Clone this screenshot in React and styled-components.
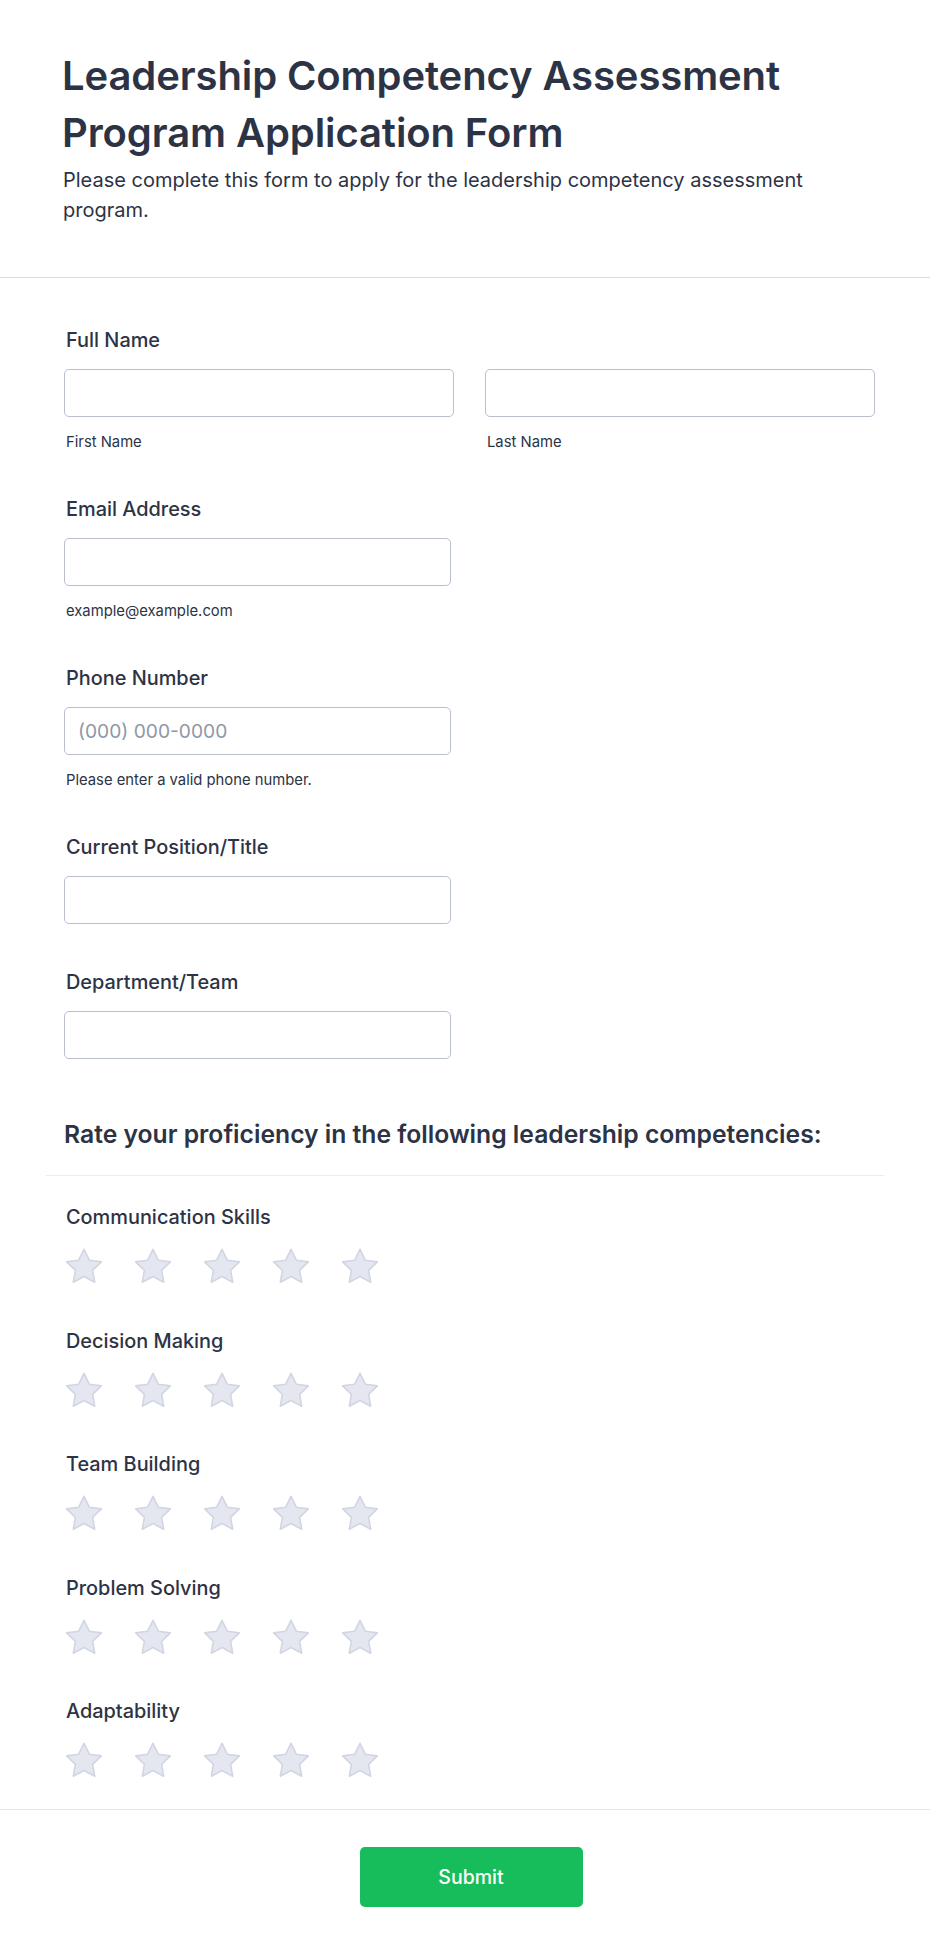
import React from "react";
import styled, { createGlobalStyle } from "styled-components";

const GlobalStyle = createGlobalStyle`
  html, body {
    margin: 0;
    padding: 0;
    background: #ffffff;
  }
  body {
    font-family: Inter, "Noto Sans", "Liberation Sans", sans-serif;
    color: #2c3345;
  }
  * {
    box-sizing: border-box;
  }
`;

const ratings = [
  "Communication Skills",
  "Decision Making",
  "Team Building",
  "Problem Solving",
  "Adaptability",
];

function Star() {
  return (
    <StarSvg viewBox="0 0 40 40" aria-hidden="true">
      <polygon
        points="20,2.3 25.3,13.2 37.3,14.9 28.6,23.3 30.7,35.2 20,29.5 9.3,35.2 11.4,23.3 2.7,14.9 14.7,13.2"
        fill="#e4e7f0"
        stroke="#d2d6e3"
        strokeWidth="1.6"
        strokeLinejoin="round"
      />
    </StarSvg>
  );
}

function App() {
  return (
    <Page>
      <GlobalStyle />

      <Header>
        <Title>Leadership Competency Assessment Program Application Form</Title>
        <Subtitle>
          Please complete this form to apply for the leadership competency assessment program.
        </Subtitle>
      </Header>

      <FormBody>
        <Field>
          <Label>Full Name</Label>
          <NameRow>
            <Column>
              <Input type="text" />
              <Sub>First Name</Sub>
            </Column>
            <Column>
              <Input type="text" />
              <Sub>Last Name</Sub>
            </Column>
          </NameRow>
        </Field>

        <Field>
          <Label>Email Address</Label>
          <Input type="email" $width="387px" />
          <Sub>example@example.com</Sub>
        </Field>

        <Field>
          <Label>Phone Number</Label>
          <Input type="tel" $width="387px" placeholder="(000) 000-0000" />
          <Sub>Please enter a valid phone number.</Sub>
        </Field>

        <Field>
          <Label>Current Position/Title</Label>
          <Input type="text" $width="387px" />
        </Field>

        <Field>
          <Label>Department/Team</Label>
          <Input type="text" $width="387px" />
        </Field>

        <RatingHeading>Rate your proficiency in the following leadership competencies:</RatingHeading>
        <Divider />

        <RatingList>
          {ratings.map((name) => (
            <RatingItem key={name}>
              <Label>{name}</Label>
              <Stars>
                {[1, 2, 3, 4, 5].map((n) => (
                  <Star key={n} />
                ))}
              </Stars>
            </RatingItem>
          ))}
        </RatingList>
      </FormBody>

      <Footer>
        <SubmitButton type="button">Submit</SubmitButton>
      </Footer>
    </Page>
  );
}

const Page = styled.div`
  width: 930px;
  min-height: 1956px;
  background: #ffffff;
  display: flex;
  flex-direction: column;
`;

const Header = styled.header`
  padding: 47px 60px 52px 62px;
  border-bottom: 1px solid #d8dae8;
`;

const Title = styled.h1`
  margin: 0;
  font-size: 40px;
  line-height: 57px;
  font-weight: 600;
  color: #2c3345;
  letter-spacing: -0.1px;
`;

const Subtitle = styled.p`
  margin: 4px 0 0 1px;
  font-size: 20px;
  line-height: 30px;
  font-weight: 400;
  color: #2c3345;
  max-width: 800px;
`;

const FormBody = styled.main`
  padding: 50px 37px 0 46px;
  display: flex;
  flex-direction: column;
`;

const Field = styled.section`
  padding: 0 18px;
  margin-bottom: 46px;
  display: flex;
  flex-direction: column;
`;

const Label = styled.label`
  display: block;
  margin: 0 0 17px 2px;
  font-size: 19.9px;
  line-height: 24px;
  font-weight: 500;
  color: #2c3345;
`;

const NameRow = styled.div`
  display: grid;
  grid-template-columns: 1fr 1fr;
  gap: 31px;
`;

const Column = styled.div`
  display: flex;
  flex-direction: column;
`;

const Input = styled.input`
  width: ${(p) => p.$width || "100%"};
  height: 48px;
  padding: 0 13px;
  border: 1px solid #b9bfcd;
  border-radius: 5px;
  background: #ffffff;
  font-family: inherit;
  font-size: 19.2px;
  color: #2c3345;
  outline: none;

  &::placeholder {
    color: #8f97a8;
  }
`;

const Sub = styled.span`
  display: block;
  margin: 16px 0 0 2px;
  font-size: 14.8px;
  line-height: 18px;
  color: #2c3345;
`;

const RatingHeading = styled.h2`
  margin: 14px 0 0;
  padding: 0 18px;
  font-size: 24.7px;
  line-height: 30px;
  font-weight: 600;
  color: #2c3345;
`;

const Divider = styled.hr`
  margin: 26px 0 0;
  width: 838px;
  border: none;
  border-top: 1px solid #eaebf3;
`;

const RatingList = styled.div`
  padding: 29px 18px 0;
  display: flex;
  flex-direction: column;
  gap: 41.6px;
`;

const RatingItem = styled.div`
  display: flex;
  flex-direction: column;

  ${Label} {
    margin-bottom: 20px;
  }
`;

const Stars = styled.div`
  display: flex;
  gap: 29px;
`;

const StarSvg = styled.svg`
  width: 40px;
  height: 40px;
  display: block;
  margin-top: -2px;
`;

const Footer = styled.footer`
  margin-top: 28px;
  padding: 37px 0 49px 12px;
  border-top: 1px solid #e4e5ee;
  display: flex;
  justify-content: center;
`;

const SubmitButton = styled.button`
  width: 223px;
  height: 60px;
  border: none;
  border-radius: 5px;
  background: #18bd5b;
  color: #ffffff;
  font-family: inherit;
  font-size: 19.5px;
  font-weight: 500;
  cursor: pointer;
`;

export default App;
